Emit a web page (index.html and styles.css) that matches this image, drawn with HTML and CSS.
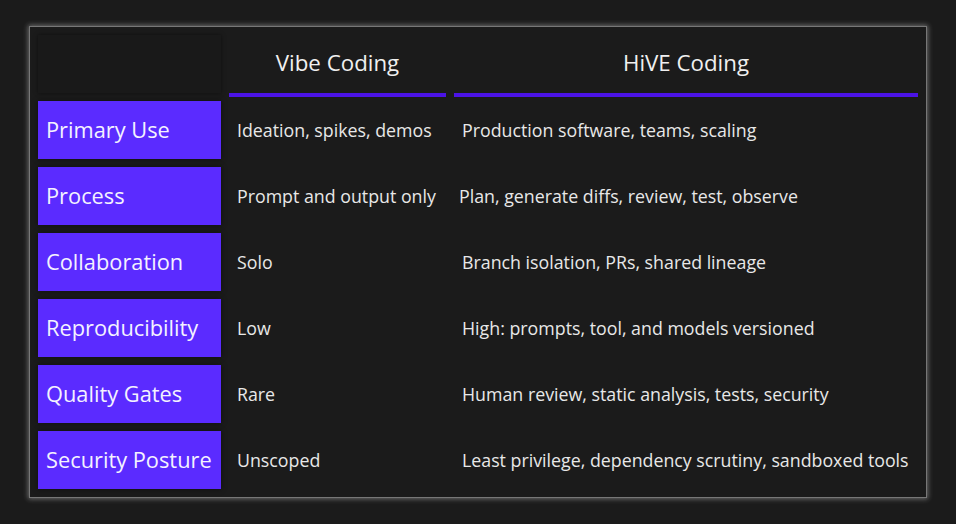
FILE: index.html
```html
<!DOCTYPE html>
<html>
<head>
<meta charset="utf-8">
<link rel="stylesheet" href="styles.css">
</head>
<body>
<div class="page">
  <div class="card">
    <table class="compare">
      <colgroup>
        <col class="c1"><col class="c2"><col class="c3">
      </colgroup>
      <thead>
        <tr>
          <th class="corner"></th>
          <th class="head">Vibe Coding</th>
          <th class="head">HiVE Coding</th>
        </tr>
      </thead>
      <tbody>
        <tr><th class="label">Primary Use</th><td>Ideation, spikes, demos</td><td>Production software, teams, scaling</td></tr>
        <tr><th class="label">Process</th><td>Prompt and output only</td><td class="tight">Plan, generate diffs, review, test, observe</td></tr>
        <tr><th class="label">Collaboration</th><td>Solo</td><td>Branch isolation, PRs, shared lineage</td></tr>
        <tr><th class="label">Reproducibility</th><td>Low</td><td>High: prompts, tool, and models versioned</td></tr>
        <tr><th class="label">Quality Gates</th><td>Rare</td><td>Human review, static analysis, tests, security</td></tr>
        <tr><th class="label">Security Posture</th><td>Unscoped</td><td>Least privilege, dependency scrutiny, sandboxed tools</td></tr>
      </tbody>
    </table>
  </div>
</div>
</body>
</html>
```
FILE: styles.css
```css
html, body {
  margin: 0;
  padding: 0;
  background: #1b1b1b;
}
body {
  font-family: "Open Sans", "Noto Sans", sans-serif;
  color: #ececec;
}
.page {
  padding: 26px 29px;
}
.card {
  width: 896px;
  background: #1b1b1b;
  border: 1px solid #777777;
  box-shadow: 0 0 5px 1px rgba(210, 210, 210, 0.45);
}
.compare {
  border-collapse: separate;
  border-spacing: 8px;
  table-layout: fixed;
  width: 896px;
}
.c1 { width: 183px; }
.c2 { width: 217px; }
.c3 { width: 464px; }
.compare th, .compare td {
  height: 58px;
  padding: 0 8px;
  box-sizing: border-box;
  vertical-align: middle;
  text-align: left;
  white-space: nowrap;
}
.corner {
  background: #191919;
  box-shadow: 0 0 4px rgba(0, 0, 0, 0.5);
}
.compare th.head {
  text-align: center;
  font-weight: 400;
  font-size: 22.3px;
  padding-bottom: 3px;
  box-shadow: 0 4px 0 0 #4b13e6;
  color: #f0f0f0;
}
.compare th.label {
  background: #5b2bff;
  font-weight: 400;
  font-size: 21.8px;
  padding-bottom: 2px;
  color: #f4f2ff;
  box-shadow: 0 0 6px rgba(0, 0, 0, 0.45);
}
.compare td {
  font-size: 17.8px;
  padding-bottom: 1px;
  color: #e8e8e8;
}
.compare td.tight {
  padding-left: 5px;
}
```
